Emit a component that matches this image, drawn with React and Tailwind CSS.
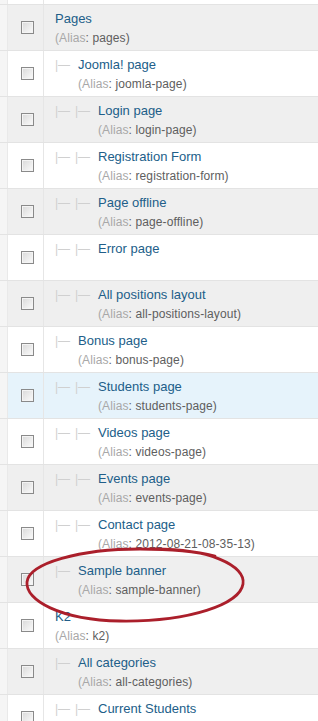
import React from "react";

const rows = [
  { title: "Pages", alias: "pages", level: 0, bg: "gray" },
  { title: "Joomla! page", alias: "joomla-page", level: 1, bg: "white" },
  { title: "Login page", alias: "login-page", level: 2, bg: "gray" },
  { title: "Registration Form", alias: "registration-form", level: 2, bg: "white" },
  { title: "Page offline", alias: "page-offline", level: 2, bg: "gray" },
  { title: "Error page", alias: null, level: 2, bg: "white" },
  { title: "All positions layout", alias: "all-positions-layout", level: 2, bg: "gray" },
  { title: "Bonus page", alias: "bonus-page", level: 1, bg: "white" },
  { title: "Students page", alias: "students-page", level: 2, bg: "blue" },
  { title: "Videos page", alias: "videos-page", level: 2, bg: "white" },
  { title: "Events page", alias: "events-page", level: 2, bg: "gray" },
  { title: "Contact page", alias: "2012-08-21-08-35-13", level: 2, bg: "white" },
  { title: "Sample banner", alias: "sample-banner", level: 1, bg: "gray" },
  { title: "K2", alias: "k2", level: 0, bg: "white" },
  { title: "All categories", alias: "all-categories", level: 1, bg: "gray" },
  { title: "Current Students", alias: null, level: 2, bg: "white" },
];

const bgClass = {
  gray: "bg-[#efefef]",
  white: "bg-white",
  blue: "bg-[#e6f3fb]",
};

function Checkbox() {
  return (
    <span className="block w-[13px] h-[13px] border border-[#8a8a8a] bg-gradient-to-br from-[#d9d9d9] to-[#fbfbfb] shadow-[inset_0_0_0_1px_#f4f4f4]" />
  );
}

function Row({ r }) {
  return (
    <div className="flex h-[46px] border-t border-[#e3e3e3]">
      <div className="w-[8px] shrink-0 bg-[#f5f5f5] border-r border-[#e9e9e9]" />
      <div className={`w-[36px] shrink-0 flex items-center pl-[13px] border-r border-[#e6e6e6] ${bgClass[r.bg]}`}>
        <Checkbox />
      </div>
      <div className={`flex-1 pl-[11px] pt-[5px] ${bgClass[r.bg]}`}>
        <div className="flex items-center h-[18px] text-[13px] text-[#215e89]">
          {Array.from({ length: r.level }).map((_, i) => (
            <span key={i} className="inline-block w-[20px] text-[12px] text-[#d0d0d0] leading-none">|—</span>
          ))}
          <span className={r.level ? "ml-[3px]" : ""}>{r.title}</span>
        </div>
        {r.alias && (
          <div className="mt-[1px] h-[18px] leading-[18px] text-[12px] text-[#5e5e5e] tracking-[0.1px]"
            style={{ marginLeft: r.level ? r.level * 20 + 3 : 0 }}>
            <span className="text-[#a8a8a8]">(Alias</span>: {r.alias})
          </div>
        )}
      </div>
    </div>
  );
}

export default function App() {
  return (
    <div className="relative w-[318px] h-[721px] overflow-hidden bg-white font-['Liberation_Sans',Arial,sans-serif]">
      <div className="flex h-[4px]">
        <div className="w-[8px] bg-[#f5f5f5] border-r border-[#e9e9e9]" />
        <div className="w-[36px] border-r border-[#e6e6e6]" />
      </div>
      {rows.map((r) => (
        <Row key={r.title} r={r} />
      ))}
      {/* red annotation circle */}
      <svg className="absolute left-0 top-0 pointer-events-none" width="318" height="721">
        <path
          d="M150 549 C 210 548, 246 566, 243 584 C 240 604, 190 622, 120 621 C 60 620, 25 600, 27 582 C 29 563, 80 549, 140 549 C 170 549, 195 551, 215 556"
          fill="none"
          stroke="#ab1f2b"
          strokeWidth="2.8"
          strokeLinecap="round"
        />
      </svg>
    </div>
  );
}
